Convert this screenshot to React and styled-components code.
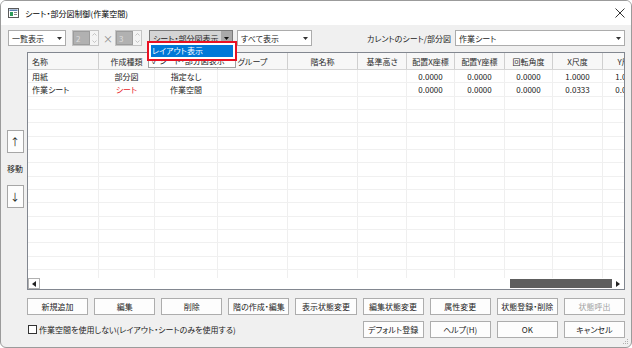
import React from 'react';
import styled, { createGlobalStyle } from 'styled-components';

const Global = createGlobalStyle`
  html, body { margin: 0; padding: 0; background: #ffffff; }
  body {
    font-family: "Noto Sans CJK JP", "Noto Sans", sans-serif;
    font-size: 8px;
    color: #222222;
    font-feature-settings: "palt";
  }
  * { box-sizing: border-box; }
`;

const Window = styled.div`
  position: relative;
  width: 632px;
  height: 348px;
  border: 1px solid #9b9b9b;
  border-radius: 6px;
  background: #f0f0f0;
  display: flex;
  flex-direction: column;
  overflow: hidden;
`;

const TitleBar = styled.div`
  height: 24px;
  background: #ffffff;
  display: flex;
  align-items: center;
  padding: 0 6px 0 7px;
  gap: 6px;
`;

const TitleText = styled.span`
  flex: 1;
  font-size: 8px;
  color: #000;
`;

const Content = styled.div`
  flex: 1;
  display: flex;
  flex-direction: column;
  padding: 5px 6px 0 0;
`;

const Toolbar = styled.div`
  display: flex;
  align-items: center;
  gap: 4px;
  padding-left: 7px;
  height: 16px;
`;

const Select = styled.div`
  width: ${(p) => p.$w}px;
  height: 16px;
  margin-left: ${(p) => p.$ml || 0}px;
  border: 1px solid ${(p) => (p.$pressed ? '#7a7a7a' : '#acacac')};
  background: ${(p) => (p.$pressed ? '#d4d4d4' : '#ffffff')};
  display: flex;
  align-items: stretch;
`;

const SelectText = styled.span`
  flex: 1;
  display: flex;
  align-items: center;
  padding-left: 3px;
  white-space: nowrap;
  overflow: hidden;
`;

const SelectArrow = styled.span`
  width: ${(p) => (p.$pressed ? 11 : 12)}px;
  display: flex;
  align-items: center;
  justify-content: center;
  background: ${(p) => (p.$pressed ? '#a9a9a9' : 'transparent')};
`;

const Spinner = styled.div`
  width: 27px;
  height: 16px;
  margin-left: ${(p) => p.$ml || 0}px;
  display: flex;
  border: 1px solid #c4c4c4;
  background: #f4f4f4;
`;

const SpinField = styled.span`
  width: 17px;
  background: #b1b1b1;
  border: 1px solid #9c9c9c;
  color: #dedede;
  display: flex;
  align-items: center;
  padding-left: 2px;
`;

const SpinButtons = styled.span`
  flex: 1;
  display: flex;
  flex-direction: column;
  align-items: center;
  justify-content: space-around;
`;

const Times = styled.span`
  color: #8a8a8a;
  width: 8px;
  text-align: center;
  font-size: 10px;
`;

const Label = styled.span`
  flex: 1;
  text-align: right;
  white-space: nowrap;
`;

const Main = styled.div`
  display: flex;
  margin-top: 6px;
  height: 238px;
`;

const SideColumn = styled.div`
  width: 26px;
  display: flex;
  flex-direction: column;
  align-items: center;
  justify-content: center;
  gap: 10px;
  padding-bottom: 4px;
  padding-left: 2px;
`;

const SideButton = styled.div`
  width: 17px;
  height: 23px;
  border: 1px solid #a6a6a6;
  background: #fdfdfd;
  display: flex;
  align-items: center;
  justify-content: center;
  font-size: 10px;
`;

const SideLabel = styled.div`
  height: 12px;
  line-height: 12px;
`;

const TableBox = styled.div`
  flex: 1;
  border: 1px solid #828790;
  background: #ffffff;
  display: flex;
  flex-direction: column;
  overflow: hidden;
`;

const Viewport = styled.div`
  flex: 1;
  overflow: hidden;
`;

const HeaderRow = styled.div`
  display: flex;
  height: 17px;
  background: #f7f7f7;
  border-bottom: 1px solid #d5d5d5;
  width: max-content;
`;

const HeaderCell = styled.div`
  flex: none;
  width: ${(p) => p.$w}px;
  border-right: 1px solid #cfcfcf;
  display: flex;
  align-items: center;
  justify-content: ${(p) => (p.$align === 'left' ? 'flex-start' : 'center')};
  padding-left: ${(p) => (p.$align === 'left' ? 4 : 0)}px;
  white-space: nowrap;
  overflow: hidden;
  color: #2a2a2a;
`;

const DataRow = styled.div`
  display: flex;
  height: calc(40px / 3);
  border-bottom: 1px solid #f0f0f0;
  width: max-content;
`;

const DataCell = styled.div`
  flex: none;
  width: ${(p) => p.$w}px;
  border-right: 1px solid #efefef;
  display: flex;
  align-items: center;
  justify-content: ${(p) => (p.$align === 'left' ? 'flex-start' : 'center')};
  padding-left: ${(p) => (p.$align === 'left' ? 4 : 0)}px;
  white-space: nowrap;
  overflow: hidden;
  color: ${(p) => (p.$red ? '#e8262c' : '#222222')};
`;

const HScroll = styled.div`
  height: 11px;
  display: flex;
  background: #ffffff;
`;

const ScrollArrow = styled.div`
  width: 12px;
  display: flex;
  align-items: center;
  justify-content: center;
  border: 1px solid ${(p) => (p.$boxed ? '#b0b0b0' : 'transparent')};
  background: #ffffff;
`;

const Track = styled.div`
  flex: 1;
  display: flex;
  justify-content: flex-end;
  padding: 1px 0;
`;

const Thumb = styled.div`
  width: 102px;
  background: #5e5e5e;
`;

const ButtonGrid = styled.div`
  display: grid;
  grid-template-columns: repeat(9, 1fr);
  column-gap: 6px;
  row-gap: 6px;
  margin-top: 8px;
  padding-left: 26px;
`;

const Button = styled.div`
  height: 17px;
  border: 1px solid #adadad;
  background: #fdfdfd;
  display: flex;
  align-items: center;
  justify-content: center;
  white-space: nowrap;
  color: ${(p) => (p.$disabled ? '#a2a2a2' : '#222222')};
`;

const CheckRow = styled.label`
  grid-column: 1 / 6;
  display: flex;
  align-items: center;
  gap: 2px;
  white-space: nowrap;
`;

const CheckBox = styled.span`
  width: 9px;
  height: 9px;
  border: 1px solid #333;
  background: #fff;
  margin-left: 1px;
`;

const Popup = styled.div`
  position: absolute;
  left: 146px;
  top: 40px;
  width: 90px;
`;

const RedFrame = styled.div`
  height: 20px;
  border: 2px solid #e81123;
  background: #ffffff;
  padding: 2px;
`;

const ActiveItem = styled.div`
  height: 12px;
  background: #0078d7;
  color: #ffffff;
  line-height: 12px;
  padding-left: 1px;
  white-space: nowrap;
`;

const ClippedItem = styled.div`
  margin: 0 1px;
  height: 7px;
  background: #ffffff;
  border: 1px solid #a0a0a0;
  border-top: none;
  overflow: hidden;
`;

const ClippedText = styled.div`
  margin-top: -6px;
  line-height: 12px;
  padding-left: 3px;
  white-space: nowrap;
`;

const Grip = styled.svg`
  position: absolute;
  right: 2px;
  bottom: 2px;
`;

const Caret = ({ color = '#333' }) => (
  <svg width="5" height="3" viewBox="0 0 5 3">
    <path d="M0 0 H5 L2.5 3 Z" fill={color} />
  </svg>
);

const SpinArrow = ({ up }) => (
  <svg width="5" height="3" viewBox="0 0 5 3">
    <path d={up ? 'M0.5 2.5 L2.5 0.5 L4.5 2.5' : 'M0.5 0.5 L2.5 2.5 L4.5 0.5'} fill="none" stroke="#b8b8b8" strokeWidth="0.8" />
  </svg>
);

const AppIcon = () => (
  <svg width="11" height="10" viewBox="0 0 11 10">
    <rect x="0.5" y="0.5" width="10" height="9" fill="#ffffff" stroke="#5a5a5a" />
    <rect x="1.5" y="1.5" width="8" height="1.5" fill="#5a7fb0" />
    <rect x="2" y="4" width="3" height="4" fill="#2e9b5a" />
    <rect x="6" y="4" width="3" height="1" fill="#8a8a8a" />
    <rect x="6" y="6" width="3" height="1" fill="#8a8a8a" />
  </svg>
);

const CloseIcon = () => (
  <svg width="10" height="10" viewBox="0 0 10 10">
    <path d="M0.5 0.5 L9.5 9.5 M9.5 0.5 L0.5 9.5" stroke="#333" strokeWidth="1" />
  </svg>
);

const ArrowTri = ({ dir }) => (
  <svg width="4" height="6" viewBox="0 0 4 6">
    <path d={dir === 'left' ? 'M4 0 V6 L0 3 Z' : 'M0 0 V6 L4 3 Z'} fill="#222" />
  </svg>
);

const columns = [
  { label: '名称', w: 71, align: 'left' },
  { label: '作成種類', w: 56 },
  { label: '', w: 63 },
  { label: 'グループ', w: 70 },
  { label: '階名称', w: 70 },
  { label: '基準高さ', w: 49 },
  { label: '配置X座標', w: 48 },
  { label: '配置Y座標', w: 50 },
  { label: '回転角度', w: 48 },
  { label: 'X尺度', w: 50 },
  { label: 'Y尺度', w: 50 },
];

const rows = [
  ['用紙', '部分図', '指定なし', '', '', '', '0.0000', '0.0000', '0.0000', '1.0000', '1.0000'],
  ['作業シート', 'シート', '作業空間', '', '', '', '0.0000', '0.0000', '0.0000', '0.0333', '0.0333'],
];
const emptyRows = Array.from({ length: 14 }, () => columns.map(() => ''));

const topButtons = ['新規追加', '編集', '削除', '階の作成・編集', '表示状態変更', '編集状態変更', '属性変更', '状態登録・削除', '状態呼出'];
const bottomButtons = ['デフォルト登録', 'ヘルプ(H)', 'OK', 'キャンセル'];

export default function App() {
  return (
    <>
      <Global />
      <Window>
        <TitleBar>
          <AppIcon />
          <TitleText>シート・部分図制御(作業空間)</TitleText>
          <CloseIcon />
        </TitleBar>
        <Content>
          <Toolbar>
            <Select $w={58}>
              <SelectText>一覧表示</SelectText>
              <SelectArrow><Caret /></SelectArrow>
            </Select>
            <Spinner $ml={2}>
              <SpinField>2</SpinField>
              <SpinButtons><SpinArrow up /><SpinArrow /></SpinButtons>
            </Spinner>
            <Times>×</Times>
            <Spinner>
              <SpinField>3</SpinField>
              <SpinButtons><SpinArrow up /><SpinArrow /></SpinButtons>
            </Spinner>
            <Select $w={84} $ml={3} $pressed>
              <SelectText>シート・部分図表示</SelectText>
              <SelectArrow $pressed><Caret color="#111" /></SelectArrow>
            </Select>
            <Select $w={75}>
              <SelectText>すべて表示</SelectText>
              <SelectArrow><Caret /></SelectArrow>
            </Select>
            <Label>カレントのシート/部分図</Label>
            <Select $w={170}>
              <SelectText>作業シート</SelectText>
              <SelectArrow><Caret /></SelectArrow>
            </Select>
          </Toolbar>
          <Main>
            <SideColumn>
              <SideButton>↑</SideButton>
              <SideLabel>移動</SideLabel>
              <SideButton>↓</SideButton>
            </SideColumn>
            <TableBox>
              <Viewport>
                <HeaderRow>
                  {columns.map((c, i) => (
                    <HeaderCell key={i} $w={c.w} $align={c.align}>{c.label}</HeaderCell>
                  ))}
                </HeaderRow>
                {[...rows, ...emptyRows].map((r, i) => (
                  <DataRow key={i}>
                    {r.map((v, j) => (
                      <DataCell key={j} $w={columns[j].w} $align={columns[j].align} $red={v === 'シート'}>{v}</DataCell>
                    ))}
                  </DataRow>
                ))}
              </Viewport>
              <HScroll>
                <ScrollArrow $boxed><ArrowTri dir="left" /></ScrollArrow>
                <Track><Thumb /></Track>
                <ScrollArrow><ArrowTri dir="right" /></ScrollArrow>
              </HScroll>
            </TableBox>
          </Main>
          <ButtonGrid>
            {topButtons.map((b) => (
              <Button key={b} $disabled={b === '状態呼出'}>{b}</Button>
            ))}
            <CheckRow>
              <CheckBox />
              作業空間を使用しない(レイアウト・シートのみを使用する)
            </CheckRow>
            {bottomButtons.map((b) => (
              <Button key={b}>{b}</Button>
            ))}
          </ButtonGrid>
        </Content>
        <Popup>
          <RedFrame>
            <ActiveItem>レイアウト表示</ActiveItem>
          </RedFrame>
          <ClippedItem>
            <ClippedText>✓ シート・部分図表示</ClippedText>
          </ClippedItem>
        </Popup>
        <Grip width="6" height="6" viewBox="0 0 6 6">
          <rect x="4" y="0" width="1" height="1" fill="#b0b0b0" />
          <rect x="2" y="2" width="1" height="1" fill="#b0b0b0" />
          <rect x="4" y="2" width="1" height="1" fill="#b0b0b0" />
          <rect x="0" y="4" width="1" height="1" fill="#b0b0b0" />
          <rect x="2" y="4" width="1" height="1" fill="#b0b0b0" />
          <rect x="4" y="4" width="1" height="1" fill="#b0b0b0" />
        </Grip>
      </Window>
    </>
  );
}
